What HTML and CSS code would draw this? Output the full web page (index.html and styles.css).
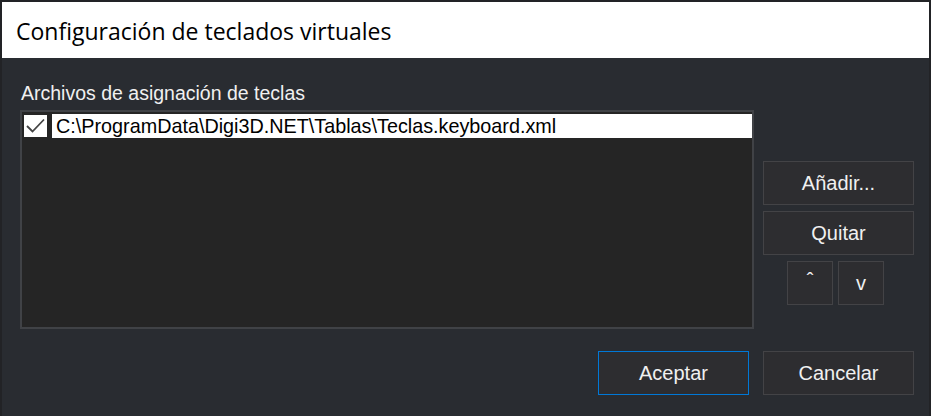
FILE: index.html
```html
<!DOCTYPE html>
<html lang="es">
<head>
<meta charset="utf-8">
<title>Configuración de teclados virtuales</title>
<link rel="stylesheet" href="styles.css">
</head>
<body>
<div class="window">
  <div class="titlebar">Configuración de teclados virtuales</div>
  <div class="content">
    <div class="label">Archivos de asignación de teclas</div>
    <div class="main-row">
      <div class="listbox">
        <div class="item">
          <span class="check">
            <svg width="23" height="22" viewBox="0 0 23 22"><path d="M3 11 L8.5 16.5 L20 4.5" fill="none" stroke="#444444" stroke-width="1.8"/></svg>
          </span>
          <span class="item-text">C:\ProgramData\Digi3D.NET\Tablas\Teclas.keyboard.xml</span>
        </div>
      </div>
      <div class="side">
        <button class="btn wide">Añadir...</button>
        <button class="btn wide">Quitar</button>
        <div class="arrows">
          <button class="btn small caret">ˆ</button>
          <button class="btn small">v</button>
        </div>
      </div>
    </div>
    <div class="footer">
      <button class="btn wide primary">Aceptar</button>
      <button class="btn wide">Cancelar</button>
    </div>
  </div>
</div>
</body>
</html>
```
FILE: styles.css
```css
html, body {
  margin: 0;
  padding: 0;
  background: #222326;
}
.window {
  width: 931px;
  height: 416px;
  box-sizing: border-box;
  padding: 2px 2px 0 2px;
  background: #222326;
  display: flex;
  flex-direction: column;
}
.titlebar {
  height: 56px;
  background: #ffffff;
  color: #000;
  font-family: "Open Sans", "Noto Sans", sans-serif;
  font-size: 23px;
  line-height: 58px;
  padding-left: 14px;
  box-sizing: border-box;
}
.content {
  flex: 1;
  background: #292c31;
  padding: 24px 15px 0 18px;
  font-family: "Liberation Sans", Arial, sans-serif;
  color: #f0f0f0;
  display: flex;
  flex-direction: column;
}
.label {
  font-size: 19.5px;
  line-height: 22px;
  height: 28px;
  padding-left: 1px;
}
.main-row {
  display: flex;
  align-items: flex-start;
}
.listbox {
  width: 735px;
  height: 219px;
  box-sizing: border-box;
  border: 2px solid #404246;
  background: #252525;
  padding: 2px 0 0 2px;
}
.item {
  display: flex;
  align-items: center;
  height: 24px;
}
.check {
  width: 23px;
  height: 22px;
  background: #ffffff;
  display: block;
  margin-right: 5px;
}
.check svg { display: block; }
.item-text {
  flex: 1;
  background: #ffffff;
  color: #000;
  font-size: 19.8px;
  line-height: 24px;
  height: 24px;
  padding-left: 4px;
}
.side {
  margin-left: 9px;
  margin-top: 51px;
  display: flex;
  flex-direction: column;
  gap: 6px;
}
.btn {
  background: #2d2d30;
  border: 1px solid #434346;
  color: #f0f0f0;
  font-family: "Liberation Sans", Arial, sans-serif;
  font-size: 20px;
  padding: 0;
  margin: 0;
  box-sizing: border-box;
}
.wide {
  width: 151px;
  height: 44px;
}
.arrows {
  display: flex;
  gap: 5px;
  padding-left: 24px;
}
.small {
  width: 46px;
  height: 44px;
}
.caret {
  padding-bottom: 6px;
}
.primary {
  border-color: #0078d7;
}
.footer {
  display: flex;
  justify-content: flex-end;
  gap: 14px;
  margin-top: 22px;
}
```
